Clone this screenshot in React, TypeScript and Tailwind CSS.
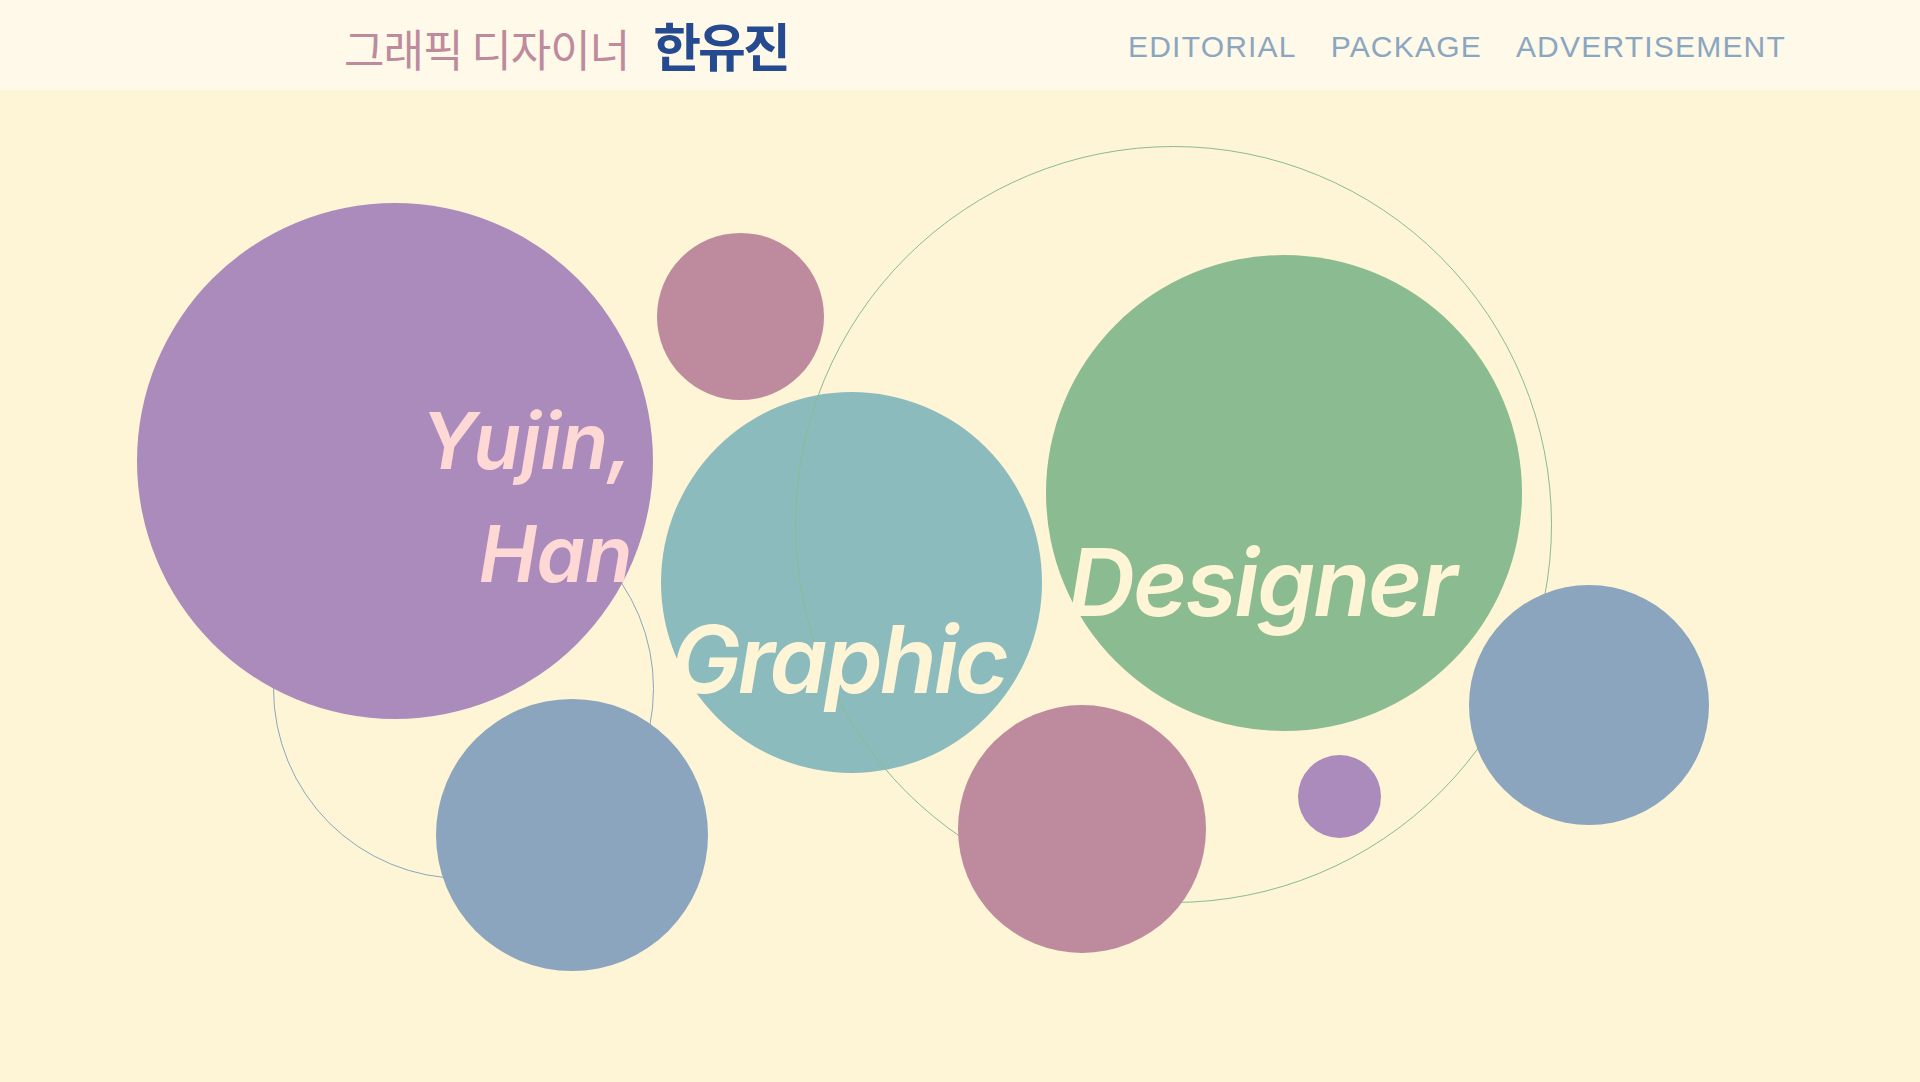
import React from "react";

const navItems = ["EDITORIAL", "PACKAGE", "ADVERTISEMENT"];

const App = () => {
  return (
    <div className="min-h-screen w-full bg-[#fef5d6] font-['Inter','Lato',sans-serif] overflow-hidden">
      {/* Header */}
      <header className="h-[90px] bg-[#fef9e8] flex items-center justify-between pl-[344px] pr-[134px]">
        <div className="flex items-baseline gap-[24px] font-['Noto_Sans_CJK_KR',sans-serif]">
          <span className="text-[44px] tracking-[-1px] text-[#bd8b9d] font-normal leading-none">그래픽 디자이너</span>
          <span className="text-[52px] tracking-[-3px] text-[#264a8f] font-bold leading-none">한유진</span>
        </div>
        <nav className="flex gap-[34px] pt-[4px] font-['Liberation_Sans',Arial,sans-serif] text-[30px] tracking-[1.2px] text-[#8aa6c0]">
          {navItems.map((item) => (
            <a key={item} href="#" className="leading-none">
              {item}
            </a>
          ))}
        </nav>
      </header>

      {/* Bubble canvas */}
      <main className="relative h-[992px]">
        <div className="absolute left-[273px] top-[408px] w-[381px] h-[381px] rounded-full border border-[#8aa6c0]" />
        <div className="absolute left-[137px] top-[113px] w-[516px] h-[516px] rounded-full bg-[#aa8bbb]" />
        <div className="absolute left-[436px] top-[609px] w-[272px] h-[272px] rounded-full bg-[#8aa5bd]" />
        <div className="absolute left-[661px] top-[302px] w-[381px] h-[381px] rounded-full bg-[#8bbbbd]" />
        <div className="absolute left-[795px] top-[56px] w-[757px] h-[757px] rounded-full border border-[#8bbb91]" />
        <div className="absolute left-[657px] top-[143px] w-[167px] h-[167px] rounded-full bg-[#bd8b9d]" />
        <div className="absolute left-[1046px] top-[165px] w-[476px] h-[476px] rounded-full bg-[#8bbb91]" />
        <div className="absolute left-[958px] top-[615px] w-[248px] h-[248px] rounded-full bg-[#bd8b9d]" />
        <div className="absolute left-[1298px] top-[665px] w-[83px] h-[83px] rounded-full bg-[#aa8bbb]" />
        <div className="absolute left-[1469px] top-[495px] w-[240px] h-[240px] rounded-full bg-[#8aa5bd]" />

        {/* Titles */}
        <div className="absolute left-[280px] top-[294px] w-[352px] text-right text-[78px] leading-[113px] font-semibold italic tracking-[-0.5px] text-[#fdd8d5]">
          <p>Yujin,</p>
          <p>Han</p>
        </div>
        <p className="absolute left-[671px] top-[523px] text-[93px] leading-none font-semibold italic tracking-[-3px] text-[#fef5d6]">
          Graphic
        </p>
        <p className="absolute left-[1068px] top-[446px] text-[93px] leading-none font-semibold italic tracking-[-2px] text-[#fef5d6]">
          Designer
        </p>
      </main>
    </div>
  );
};

export default App;
